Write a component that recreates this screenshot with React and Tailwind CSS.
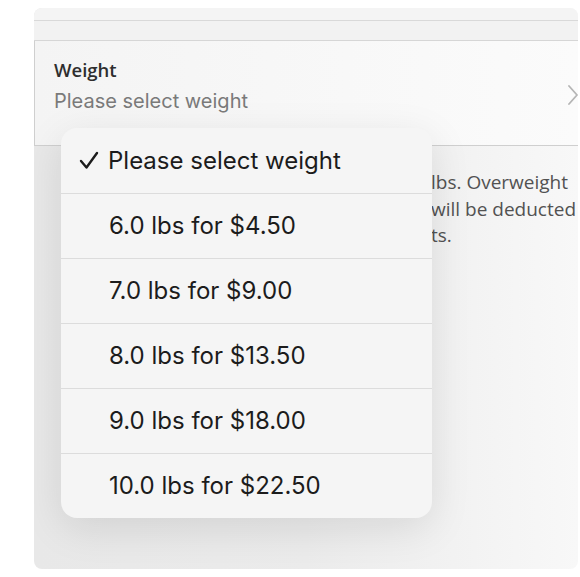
import { useState } from "react"

export default function App() {
    const [selected, setSelected] = useState(null)

    const options = [
        { label: "6.0 lbs for $4.50" },
        { label: "7.0 lbs for $9.00" },
        { label: "8.0 lbs for $13.50" },
        { label: "9.0 lbs for $18.00" },
        { label: "10.0 lbs for $22.50" },
    ]

    // note lines, first part sits under the dropdown
    const note = [
        ["Maximum weight per item is 10.0 ", "lbs. Overweight"],
        ["items exceeding the limit ", "will be deducted"],
        ["from your credi", "ts."],
    ]

    return (
        <div className="w-[580px] h-[577px] bg-white pt-2 pl-[34px] pr-[2px] font-['Inter',sans-serif] overflow-hidden">
            <div className="relative h-[561px] rounded-lg bg-gradient-to-r from-[#e8e8e8] via-[#ebebeb] to-[#f8f8f8] overflow-hidden">
                {/* --- top strips --- */}
                <div className="h-[13px] bg-[#f4f4f4] border-b border-[#d9d9d9]"></div>
                <div className="h-[20px] bg-[#f2f2f2] border-b border-[#d6d6d6]"></div>

                {/* --- WEIGHT ROW --- */}
                <div className="h-[105px] bg-gradient-to-r from-[#f4f4f4] to-[#fbfbfb] border-l border-b border-[#cfcfcf] flex justify-between pl-[19px]">
                    <div className="pt-[17px]">
                        <div className="text-[18.5px] font-semibold text-[#2e2e2e] font-['Open_Sans',sans-serif] leading-[24px]">Weight</div>
                        <div className="text-[20px] text-[#7a7a7a] leading-[26px] mt-[6px]">Please select weight</div>
                    </div>
                    <svg width="14" height="22" viewBox="0 0 14 22" className="mt-[43px] -mr-[2px]">
                        <path d="M3 2 L11 11 L3 20" fill="none" stroke="#b5b5b5" strokeWidth="1.8" strokeLinecap="round" strokeLinejoin="round" />
                    </svg>
                </div>

                {/* --- NOTE --- */}
                <div className="pt-[23px] text-[19px] leading-[26.5px] text-[#525252] font-['Open_Sans',sans-serif]">
                    {note.map((l, i) => (
                        <div key={i} className="flex whitespace-pre">
                            <span className="w-[397px] shrink-0 text-right overflow-hidden">{l[0]}</span>
                            <span>{l[1]}</span>
                        </div>
                    ))}
                </div>

                {/* --- DROPDOWN --- */}
                <div className="absolute left-[27px] top-[120px] w-[371px] rounded-2xl bg-[#f5f5f5] shadow-[0_10px_40px_rgba(0,0,0,0.10)] overflow-hidden">
                    <button
                        onClick={() => setSelected(null)}
                        className="w-full h-[65px] flex items-center pl-[18px] text-[24px] text-[#1c1c1c] text-left"
                    >
                        <svg width="20" height="19" viewBox="0 0 20 19" className="mr-[9px]">
                            <path d="M2 10 L7.5 16.5 L18 2" fill="none" stroke="#1c1c1c" strokeWidth="2.4" strokeLinecap="round" strokeLinejoin="round" />
                        </svg>
                        <span>Please select weight</span>
                    </button>
                    {options.map((o, i) => (
                        <button
                            key={i}
                            onClick={() => setSelected(i)}
                            className="w-full h-[65px] flex items-center pl-[48px] text-[24px] text-[#1c1c1c] border-t border-[#dcdcdc] text-left"
                        >
                            {o.label}
                        </button>
                    ))}
                </div>
            </div>
        </div>
    )
}
